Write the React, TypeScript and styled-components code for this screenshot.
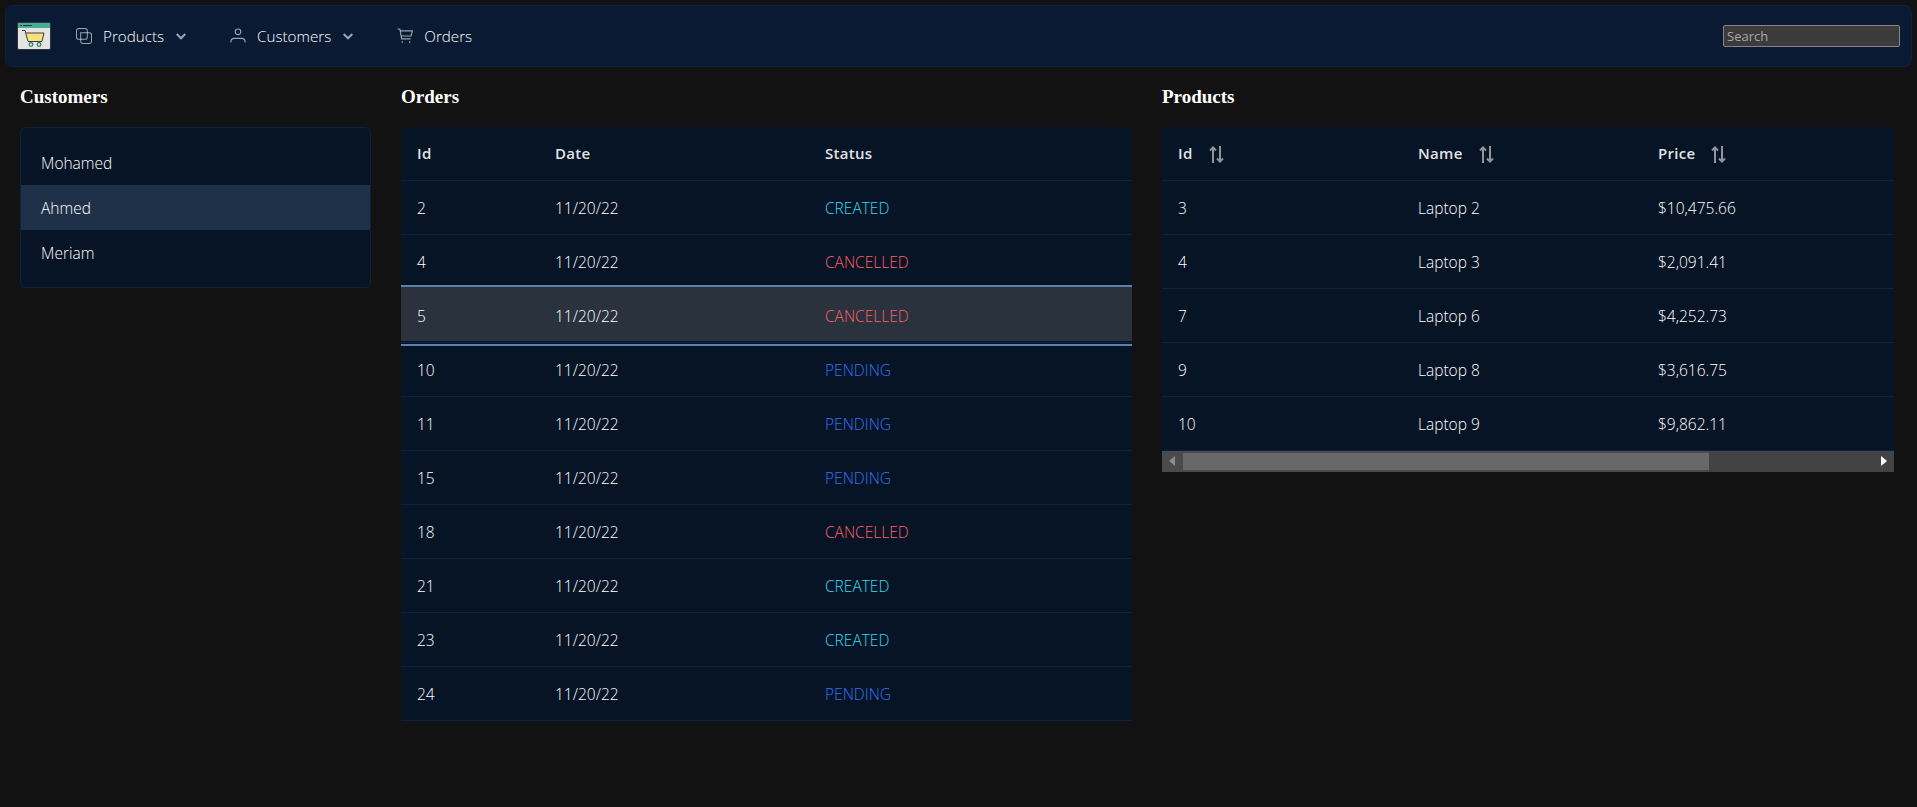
import React from 'react';
import styled, { createGlobalStyle } from 'styled-components';

const GlobalStyle = createGlobalStyle`
  html, body {
    margin: 0;
    padding: 0;
    background: #121212;
    color: #fff;
  }
  * {
    box-sizing: border-box;
  }
`;

const customers = ['Mohamed', 'Ahmed', 'Meriam'];

type OrderStatus = 'CREATED' | 'CANCELLED' | 'PENDING';

const orders: { id: number; status: OrderStatus; selected?: boolean }[] = [
  { id: 2, status: 'CREATED' },
  { id: 4, status: 'CANCELLED' },
  { id: 5, status: 'CANCELLED', selected: true },
  { id: 10, status: 'PENDING' },
  { id: 11, status: 'PENDING' },
  { id: 15, status: 'PENDING' },
  { id: 18, status: 'CANCELLED' },
  { id: 21, status: 'CREATED' },
  { id: 23, status: 'CREATED' },
  { id: 24, status: 'PENDING' },
];

const products = [
  { id: 3, name: 'Laptop 2', price: '$10,475.66' },
  { id: 4, name: 'Laptop 3', price: '$2,091.41' },
  { id: 7, name: 'Laptop 6', price: '$4,252.73' },
  { id: 9, name: 'Laptop 8', price: '$3,616.75' },
  { id: 10, name: 'Laptop 9', price: '$9,862.11' },
];

const statusColors: Record<OrderStatus, string> = {
  CREATED: '#30dcfa',
  CANCELLED: '#ff5f66',
  PENDING: '#2f74f4',
};

const Logo = () => (
  <LogoSvg viewBox="0 0 34 28" width="34" height="28">
    <rect x="0.5" y="0.5" width="33" height="27" rx="1.5" fill="#e4e4e0" stroke="#2f343c" />
    <rect x="1" y="1" width="32" height="5" fill="#45ad98" />
    <path d="M3 3.500h2M6 3.500h9" stroke="#22343a" strokeWidth="1" />
    <path d="M9 11h18l-2 8H11z" fill="#f7e27a" />
    <path d="M5 8.500h3l3 11h14M9 11h18l-2 8" fill="none" stroke="#3a4046" strokeWidth="1" />
    <circle cx="14" cy="22.500" r="1.800" fill="none" stroke="#2f7a70" strokeWidth="1.200" />
    <circle cx="22" cy="22.500" r="1.800" fill="none" stroke="#2f7a70" strokeWidth="1.200" />
  </LogoSvg>
);

const CloneIcon = () => (
  <NavIcon viewBox="0 0 17 17" fill="none" stroke="currentColor" strokeWidth="1.100">
    <rect x="0.500" y="0.500" width="11.500" height="11.500" rx="2.500" />
    <path d="M5 5h9a2.500 2.500 0 0 1 2.500 2.500v6.500a2.500 2.500 0 0 1-2.500 2.500h-6.500a2.500 2.500 0 0 1-2.500-2.500z" />
  </NavIcon>
);

const UserIcon = () => (
  <NavIcon viewBox="0 0 17 17" fill="none" stroke="currentColor" strokeWidth="1.200">
    <circle cx="8.500" cy="4" r="3" />
    <path d="M1 15.500v-1a3.500 3.500 0 0 1 3.500-3.500h8a3.500 3.500 0 0 1 3.500 3.500v1" />
  </NavIcon>
);

const CartIcon = () => (
  <NavIcon viewBox="0 0 17 17" fill="none" stroke="currentColor" strokeWidth="1.200">
    <path d="M0.500 1h2.500l2 10.500h9.500" />
    <path d="M3.300 3h13l-1.300 5.500h-10.700" />
    <path d="M5.500 14v2M13.500 14v2" />
  </NavIcon>
);

const ChevronIcon = () => (
  <Chevron viewBox="0 0 10 7" fill="none" stroke="currentColor" strokeWidth="2">
    <path d="M0.700 1l4.300 4.300L9.300 1" />
  </Chevron>
);

const SortIcon = () => (
  <SortSvg viewBox="0 0 15 17" fill="none" stroke="currentColor" strokeWidth="2">
    <path d="M4 17V1.500M1 4.500l3-3 3 3" />
    <path d="M11 0V15.500M8 12.500l3 3 3-3" />
  </SortSvg>
);

const App = () => {
  return (
    <Page>
      <GlobalStyle />
      <Menubar>
        <Logo />
        <MenuItems>
          <MenuItem>
            <CloneIcon />
            <span>Products</span>
            <ChevronIcon />
          </MenuItem>
          <MenuItem>
            <UserIcon />
            <span>Customers</span>
            <ChevronIcon />
          </MenuItem>
          <MenuItem>
            <CartIcon />
            <span>Orders</span>
          </MenuItem>
        </MenuItems>
        <SearchInput placeholder="Search" />
      </Menubar>

      <Columns>
        <section>
          <Title>Customers</Title>
          <Listbox>
            {customers.map((name) => (
              <ListItem key={name} $selected={name === 'Ahmed'}>
                {name}
              </ListItem>
            ))}
          </Listbox>
        </section>

        <section>
          <Title>Orders</Title>
          <Table>
            <colgroup>
              <col width="138" />
              <col width="270" />
              <col />
            </colgroup>
            <thead>
              <tr>
                <HeadCell>Id</HeadCell>
                <HeadCell>Date</HeadCell>
                <HeadCell>Status</HeadCell>
              </tr>
            </thead>
            <tbody>
              {orders.map((order) => (
                <Row key={order.id} $selected={order.selected}>
                  <Cell>{order.id}</Cell>
                  <Cell>11/20/22</Cell>
                  <Cell style={{ color: statusColors[order.status] }}>{order.status}</Cell>
                </Row>
              ))}
            </tbody>
          </Table>
        </section>

        <section>
          <Title>Products</Title>
          <Table>
            <colgroup>
              <col width="240" />
              <col width="240" />
              <col />
            </colgroup>
            <thead>
              <tr>
                <HeadCell>
                  Id
                  <SortIcon />
                </HeadCell>
                <HeadCell>
                  Name
                  <SortIcon />
                </HeadCell>
                <HeadCell>
                  Price
                  <SortIcon />
                </HeadCell>
              </tr>
            </thead>
            <tbody>
              {products.map((product) => (
                <Row key={product.id}>
                  <Cell>{product.id}</Cell>
                  <Cell>{product.name}</Cell>
                  <Cell>{product.price}</Cell>
                </Row>
              ))}
            </tbody>
          </Table>
          <Scrollbar>
            <ScrollArrow $direction="left" />
            <ScrollTrack>
              <ScrollThumb />
            </ScrollTrack>
            <ScrollArrow $direction="right" />
          </Scrollbar>
        </section>
      </Columns>
    </Page>
  );
};

const Page = styled.div`
  width: 1917px;
  height: 807px;
  padding: 5px 5px 0;
  background: #121212;
  font-family: 'Open Sans', sans-serif;
  overflow: hidden;
`;

const Menubar = styled.header`
  display: flex;
  align-items: center;
  height: 62px;
  padding: 0 11px;
  background: #091a32;
  border: 1px solid #0b213f;
  border-radius: 7px;
`;

const LogoSvg = styled.svg`
  flex: none;
`;

const MenuItems = styled.nav`
  display: flex;
  align-items: center;
  gap: 16px;
  margin-left: 11px;
  flex: 1;
`;

const MenuItem = styled.div`
  display: flex;
  align-items: center;
  height: 44px;
  padding: 0 14px;
  color: #fff;
  font-size: 15.2px;
  font-weight: 300;
  span {
    margin-left: 11px;
  }
`;

const NavIcon = styled.svg`
  width: 16px;
  height: 16px;
  color: rgba(255, 255, 255, 0.6);
`;

const Chevron = styled.svg`
  width: 10px;
  height: 7px;
  margin-left: 12px;
  color: rgba(255, 255, 255, 0.6);
`;

const SearchInput = styled.input`
  width: 177px;
  height: 22px;
  padding: 1px 3px;
  background: #3b3b3b;
  border: 1px solid #858585;
  border-radius: 2px;
  color: #fff;
  font-family: 'Open Sans', sans-serif;
  font-size: 13px;
  outline: none;
  &::placeholder {
    color: #a8a8a8;
  }
`;

const Columns = styled.main`
  display: grid;
  grid-template-columns: 351px 731px 732px;
  column-gap: 30px;
  padding: 0 15px;
`;

const Title = styled.h4`
  margin: 20px 0 0;
  height: 40px;
  color: #fff;
  font-family: 'Liberation Serif', serif;
  font-size: 19px;
  font-weight: 700;
  line-height: 20px;
`;

const Listbox = styled.div`
  padding: 12px 0;
  background: #071426;
  border: 1px solid #0b213f;
  border-radius: 6px;
`;

const ListItem = styled.div<{ $selected?: boolean }>`
  height: 45px;
  padding: 1px 20px 0;
  background: ${(props) => (props.$selected ? '#1f3049' : 'transparent')};
  color: #fff;
  font-size: 15.5px;
  font-weight: 300;
  line-height: 45px;
`;

const Table = styled.table`
  width: 100%;
  border-collapse: collapse;
  table-layout: fixed;
  background: #071426;
  color: #fff;
  font-size: 15.5px;
`;

const HeadCell = styled.th`
  height: 53px;
  padding: 0 16px;
  border-bottom: 1px solid #0b213f;
  text-align: left;
  font-weight: 600;
  font-size: 15px;
  letter-spacing: 0.3px;
  color: rgba(255, 255, 255, 0.9);
`;

const SortSvg = styled.svg`
  width: 15px;
  height: 17px;
  margin-left: 16px;
  vertical-align: -4px;
  color: rgba(255, 255, 255, 0.55);
`;

const Row = styled.tr<{ $selected?: boolean }>`
  ${(props) =>
    props.$selected &&
    `
    td {
      position: relative;
      isolation: isolate;
    }
    td::before {
      content: '';
      position: absolute;
      z-index: -1;
      left: 0;
      right: 0;
      top: -2px;
      bottom: 1px;
      background: #2a323d;
    }
    td::after {
      content: '';
      position: absolute;
      z-index: -1;
      left: 0;
      right: 0;
      top: -4px;
      bottom: -4px;
      border-top: 2px solid #5c80ab;
      border-bottom: 2px solid #5c80ab;
    }
  `}
`;

const Cell = styled.td`
  height: 54px;
  padding: 2px 16px 0;
  border-bottom: 1px solid #0b213f;
  font-weight: 300;
`;

const Scrollbar = styled.div`
  display: flex;
  align-items: stretch;
  height: 21px;
  background: #434343;
`;

const ScrollArrow = styled.div<{ $direction: 'left' | 'right' }>`
  position: relative;
  flex: none;
  width: 21px;
  background: ${(props) => (props.$direction === 'left' ? '#4a4a4a' : '#434343')};
  &::after {
    content: '';
    position: absolute;
    top: 5px;
    ${(props) => (props.$direction === 'left' ? 'left: 7px;' : 'right: 7px;')}
    border-style: solid;
    border-width: 5px 0;
    border-color: transparent;
    ${(props) =>
      props.$direction === 'left'
        ? 'border-right: 6px solid #8a8a8a;'
        : 'border-left: 6px solid #fff;'}
  }
`;

const ScrollTrack = styled.div`
  flex: 1;
  background: #434343;
`;

const ScrollThumb = styled.div`
  width: 526px;
  height: 100%;
  background: #686868;
  border-top: 2px solid #4a4a4a;
  border-bottom: 2px solid #4a4a4a;
`;

export default App;
